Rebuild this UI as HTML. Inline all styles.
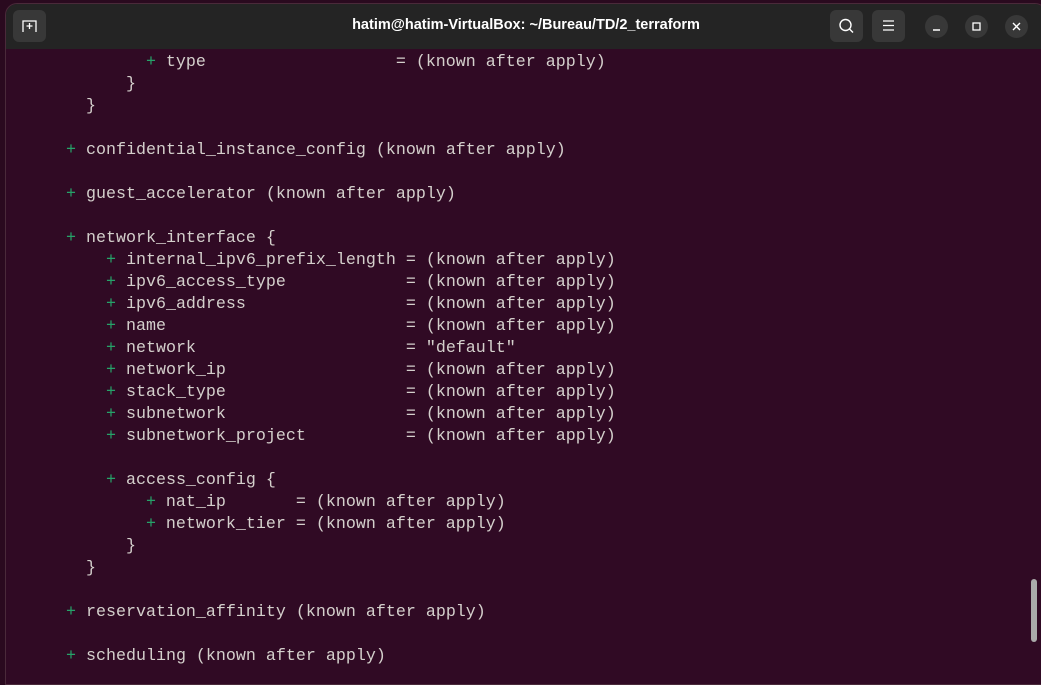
<!DOCTYPE html>
<html><head><meta charset="utf-8"><style>
html,body{margin:0;padding:0;width:1041px;height:670px;overflow:hidden;background:#2a0a1f;}
.win{position:absolute;left:5px;top:3px;width:1040px;height:680px;background:#300a24;border-radius:12px 12px 0 0;overflow:hidden;border:1px solid #4a2a3a;}
.tb{position:absolute;left:0;top:0;right:0;height:45px;background:#242424;}
.title{position:absolute;left:0;right:0;top:13px;text-align:center;color:#ffffff;font:bold 14.5px "Liberation Sans",sans-serif;}
.btn{position:absolute;top:6px;width:33px;height:32px;background:#383838;border-radius:6px;}
.cb{position:absolute;top:11px;width:23px;height:23px;border-radius:50%;background:#383838;}
pre{position:absolute;left:0px;top:48px;margin:0;font:16.67px/22px "Liberation Mono",monospace;color:#d4d0cc;}
.g{color:#26a269;}
.sb{position:absolute;left:1025px;top:575px;width:6px;height:63px;background:#aaa;border-radius:3px;}
</style></head><body>
<div class="win">
<div class="tb">
<div class="btn" style="left:7px;"><svg width="33" height="32"><path d="M10 22V11h13v11M16.5 13v6M13.5 16h6" stroke="#fff" stroke-width="1.3" fill="none"/></svg></div>
<div class="title">hatim@hatim-VirtualBox: ~/Bureau/TD/2_terraform</div>
<div class="btn" style="left:824px;"><svg width="33" height="32"><circle cx="15.5" cy="15" r="5.5" stroke="#fff" stroke-width="1.4" fill="none"/><path d="M19.5 19l3.5 3.5" stroke="#fff" stroke-width="1.4"/></svg></div>
<div class="btn" style="left:866px;"><svg width="33" height="32"><path d="M11 11h11M11 15.5h11M11 20h11" stroke="#fff" stroke-width="1.2"/></svg></div>
<div class="cb" style="left:919px;"><svg width="23" height="23"><path d="M8 15h7" stroke="#fff" stroke-width="1.4"/></svg></div>
<div class="cb" style="left:959px;"><svg width="23" height="23"><rect x="8" y="8" width="7" height="7" stroke="#fff" stroke-width="1.3" fill="none"/></svg></div>
<div class="cb" style="left:999px;"><svg width="23" height="23"><path d="M8 8l7 7M15 8l-7 7" stroke="#fff" stroke-width="1.4"/></svg></div>
</div>
<pre>              <span class="g">+</span> type                   = (known after apply)
            }
        }

      <span class="g">+</span> confidential_instance_config (known after apply)

      <span class="g">+</span> guest_accelerator (known after apply)

      <span class="g">+</span> network_interface {
          <span class="g">+</span> internal_ipv6_prefix_length = (known after apply)
          <span class="g">+</span> ipv6_access_type            = (known after apply)
          <span class="g">+</span> ipv6_address                = (known after apply)
          <span class="g">+</span> name                        = (known after apply)
          <span class="g">+</span> network                     = "default"
          <span class="g">+</span> network_ip                  = (known after apply)
          <span class="g">+</span> stack_type                  = (known after apply)
          <span class="g">+</span> subnetwork                  = (known after apply)
          <span class="g">+</span> subnetwork_project          = (known after apply)

          <span class="g">+</span> access_config {
              <span class="g">+</span> nat_ip       = (known after apply)
              <span class="g">+</span> network_tier = (known after apply)
            }
        }

      <span class="g">+</span> reservation_affinity (known after apply)

      <span class="g">+</span> scheduling (known after apply)</pre>
<div class="sb"></div>
</div>
</body></html>
